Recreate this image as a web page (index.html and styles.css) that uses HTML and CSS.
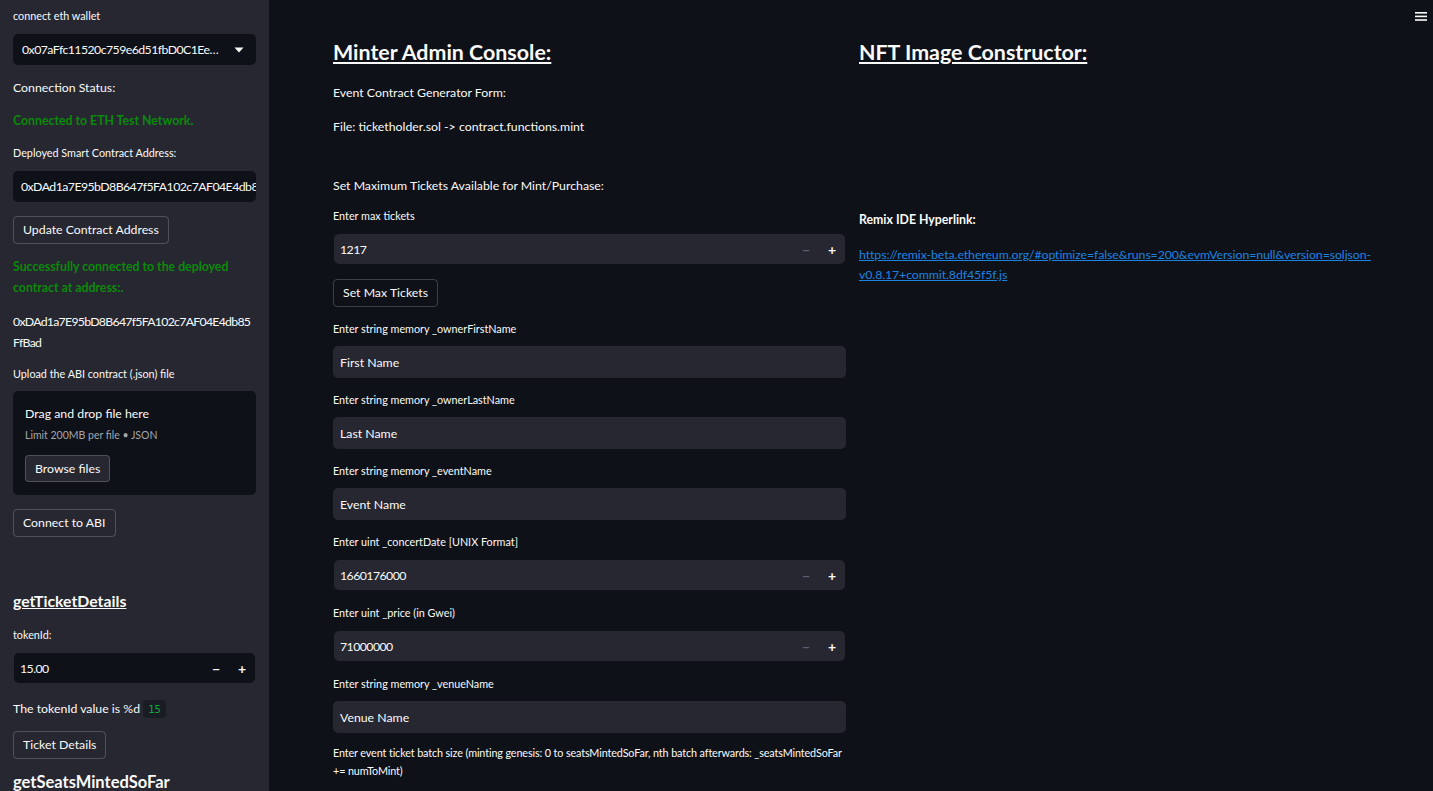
FILE: index.html
```html
<!DOCTYPE html>
<html lang="en">
<head>
<meta charset="utf-8">
<title>Minter Admin Console</title>
<link rel="stylesheet" href="styles.css">
</head>
<body>
<div class="app">
  <aside class="sidebar">
    <div class="widget">
      <div class="label">connect eth wallet</div>
      <div class="select">
        <span class="select-text hex">0x07aFfc11520c759e6d51fbD0C1Ee2EA8a1c0D2a4</span>
        <svg class="caret" width="10" height="6" viewBox="0 0 10 6"><path d="M0.5 0.5h9L5 5.5z" fill="#fafafa"/></svg>
      </div>
    </div>
    <p class="txt mt-13">Connection Status:</p>
    <p class="txt green bold mt-13">Connected to ETH Test Network.</p>
    <div class="widget mt-15">
      <div class="label">Deployed Smart Contract Address:</div>
      <div class="input dark side-input"><span class="clip hex">0xDAd1a7E95bD8B647f5FA102c7AF04E4db85FfBad</span></div>
    </div>
    <button class="btn mt-14">Update Contract Address</button>
    <p class="txt green bold lh21 mt-12">Successfully connected to the deployed contract at address:.</p>
    <p class="txt lh21 break hex-tight mt-13">0xDAd1a7E95bD8B647f5FA102c7AF04E4db85FfBad</p>
    <div class="widget mt-14">
      <div class="label">Upload the ABI contract (.json) file</div>
      <div class="dropzone">
        <div class="dz-title">Drag and drop file here</div>
        <div class="dz-sub">Limit 200MB per file • JSON</div>
        <button class="btn dz-btn">Browse files</button>
      </div>
    </div>
    <button class="btn mt-14">Connect to ABI</button>
    <h4 class="side-h mt-52"><u>getTicketDetails</u></h4>
    <div class="widget mt-15">
      <div class="label">tokenId:</div>
      <div class="numinput dark">
        <span class="num-val hex">15.00</span>
        <span class="step">&#8722;</span>
        <span class="step">+</span>
      </div>
    </div>
    <p class="txt mt-16">The tokenId value is %d <code class="chip">15</code></p>
    <button class="btn mt-12">Ticket Details</button>
    <h4 class="side-h side-h-lg mt-11">getSeatsMintedSoFar</h4>
  </aside>
  <main class="main">
    <div class="menu-btn">
      <svg width="12" height="9" viewBox="0 0 12 9"><rect x="0" y="0" width="12" height="1.6" fill="#fafafa"/><rect x="0" y="3.6" width="12" height="1.6" fill="#fafafa"/><rect x="0" y="7.2" width="12" height="1.6" fill="#fafafa"/></svg>
    </div>
    <div class="content">
      <section class="col">
        <h3 class="h3"><u>Minter Admin Console:</u></h3>
        <p class="txt mt-17">Event Contract Generator Form:</p>
        <p class="txt mt-14">File: ticketholder.sol -&gt; contract.functions.mint</p>
        <p class="txt mt-39">Set Maximum Tickets Available for Mint/Purchase:</p>
        <div class="widget mt-13">
          <div class="label">Enter max tickets</div>
          <div class="numinput gray">
            <span class="num-val hex">1217</span>
            <span class="step dim">&#8722;</span>
            <span class="step">+</span>
          </div>
        </div>
        <button class="btn mt-15">Set Max Tickets</button>
        <div class="widget mt-15">
          <div class="label">Enter string memory _ownerFirstName</div>
          <div class="input gray tall">First Name</div>
        </div>
        <div class="widget mt-15">
          <div class="label">Enter string memory _ownerLastName</div>
          <div class="input gray tall">Last Name</div>
        </div>
        <div class="widget mt-15">
          <div class="label">Enter string memory _eventName</div>
          <div class="input gray tall">Event Name</div>
        </div>
        <div class="widget mt-15">
          <div class="label">Enter uint _concertDate [UNIX Format]</div>
          <div class="numinput gray">
            <span class="num-val hex">1660176000</span>
            <span class="step dim">&#8722;</span>
            <span class="step">+</span>
          </div>
        </div>
        <div class="widget mt-16">
          <div class="label">Enter uint _price (in Gwei)</div>
          <div class="numinput gray">
            <span class="num-val hex">71000000</span>
            <span class="step dim">&#8722;</span>
            <span class="step">+</span>
          </div>
        </div>
        <div class="widget mt-16">
          <div class="label">Enter string memory _venueName</div>
          <div class="input gray tall">Venue Name</div>
        </div>
        <div class="widget mt-13">
          <div class="label lh18 tight">Enter event ticket batch size (minting genesis: 0 to seatsMintedSoFar, nth batch afterwards: _seatsMintedSoFar += numToMint)</div>
        </div>
      </section>
      <section class="col">
        <h3 class="h3"><u>NFT Image Constructor:</u></h3>
        <p class="txt bold mt-144">Remix IDE Hyperlink:</p>
        <p class="txt mt-15"><a class="link" href="#"><span class="nw">https://remix-beta.ethereum.org/#optimize=false&amp;runs=200&amp;evmVersion=null&amp;version=soljson-</span>v0.8.17+commit.8df45f5f.js</a></p>
      </section>
    </div>
  </main>
</div>
</body>
</html>
```
FILE: styles.css
```css
* { box-sizing: border-box; }
html, body {
  margin: 0;
  padding: 0;
  height: 100%;
  overflow: hidden;
}
body {
  background: #0e1117;
  color: #fafafa;
  font-family: "Lato", "Open Sans", "Liberation Sans", sans-serif;
  font-size: 12.3px;
}
.app {
  display: flex;
  height: 791px;
}
.sidebar {
  width: 269px;
  flex: none;
  background: #262730;
  padding: 9px 13px 0 13px;
  display: flex;
  flex-direction: column;
  align-items: flex-start;
  overflow: hidden;
}
.sidebar > * { flex: none; }
.main {
  flex: 1;
  position: relative;
  display: flex;
  justify-content: center;
  padding-top: 38px;
}
.content {
  width: 1039px;
  display: grid;
  grid-template-columns: 513px 513px;
  column-gap: 13px;
  margin-left: 3px;
}
.col {
  display: flex;
  flex-direction: column;
  align-items: flex-start;
}
.widget { width: 100%; display: flex; flex-direction: column; }
.label {
  font-size: 10.8px;
  line-height: 14px;
  height: 14px;
  margin-bottom: 10px;
  white-space: nowrap;
}
.label.lh18 {
  height: auto;
  line-height: 18px;
  white-space: normal;
  margin-top: -2px;
  margin-bottom: 0;
}
.tight { letter-spacing: -0.12px; }
.hex { letter-spacing: -0.55px; }
.hex-tight { letter-spacing: -0.72px; }
.txt {
  margin: 0;
  line-height: 20px;
}
.lh21 { line-height: 21px; }
.bold { font-weight: 700; }
.green { color: #0a8a0a; }
.break { word-break: break-all; }
.select, .input, .numinput {
  width: 100%;
  border-radius: 5px;
  display: flex;
  align-items: center;
}
.dark { background: #0e1117; }
.gray { background: #262730; }
.select {
  height: 31px;
  background: #0e1117;
  padding: 0 12px 0 9px;
  margin-top: 1px;
}
.select-text {
  flex: 1;
  min-width: 0;
  overflow: hidden;
  white-space: nowrap;
  text-overflow: ellipsis;
  padding-right: 12px;
}
.caret { flex: none; }
.input {
  height: 31px;
  padding: 0 8px;
  overflow: hidden;
  white-space: nowrap;
}
.side-input { margin-top: 1px; }
.input.tall {
  height: 32px;
  padding: 0 7px;
}
.clip { white-space: nowrap; }
.numinput {
  height: 30px;
  padding: 0 0 0 6px;
  margin-top: 1px;
}
.col .numinput { width: 511px; margin-left: 1px; }
.sidebar .numinput { width: 241px; margin-left: 1px; }
.num-val { flex: 1; }
.step {
  width: 26px;
  text-align: center;
  font-weight: 700;
  font-size: 14px;
  color: #fafafa;
}
.step.dim { color: #5c5f6e; }
.btn {
  font-family: inherit;
  font-size: 12.3px;
  color: #fafafa;
  background: transparent;
  border: 1px solid rgba(250, 250, 250, 0.2);
  border-radius: 4px;
  height: 28px;
  padding: 0 9px;
  line-height: 26px;
  cursor: pointer;
}
.dropzone {
  width: 100%;
  height: 104px;
  background: #0e1117;
  border-radius: 5px;
  padding: 13px 12px;
  display: flex;
  flex-direction: column;
  align-items: flex-start;
}
.dz-title { line-height: 20px; }
.dz-sub {
  font-size: 10.5px;
  line-height: 14px;
  margin-top: 4px;
  color: #a3a5ad;
}
.dz-btn {
  margin-top: 13px;
  background: #262730;
  height: 27px;
  line-height: 25px;
}
.side-h {
  margin: 0;
  font-size: 15.8px;
  font-weight: 700;
  line-height: 24px;
}
.side-h-lg { font-size: 16.5px; }
.chip {
  font-family: "DejaVu Sans Mono", "Liberation Mono", monospace;
  font-size: 10.5px;
  color: #09ab3b;
  background: #1a1c23;
  border-radius: 4px;
  padding: 3px 5px;
}
.h3 {
  margin: 0;
  font-size: 21.4px;
  font-weight: 700;
  line-height: 28px;
}
.link {
  color: #1c83e1;
  text-decoration: underline;
  letter-spacing: -0.08px;
}
.nw { white-space: nowrap; }
.menu-btn {
  position: absolute;
  top: 12px;
  right: 6px;
  width: 12px;
  height: 9px;
  display: flex;
}
.mt-8 { margin-top: 8px; }
.mt-10 { margin-top: 10px; }
.mt-11 { margin-top: 11px; }
.mt-12 { margin-top: 12px; }
.mt-13 { margin-top: 13px; }
.mt-14 { margin-top: 14px; }
.mt-15 { margin-top: 15px; }
.mt-16 { margin-top: 16px; }
.mt-17 { margin-top: 17px; }
.mt-39 { margin-top: 39px; }
.mt-52 { margin-top: 52px; }
.mt-144 { margin-top: 144px; }
```
